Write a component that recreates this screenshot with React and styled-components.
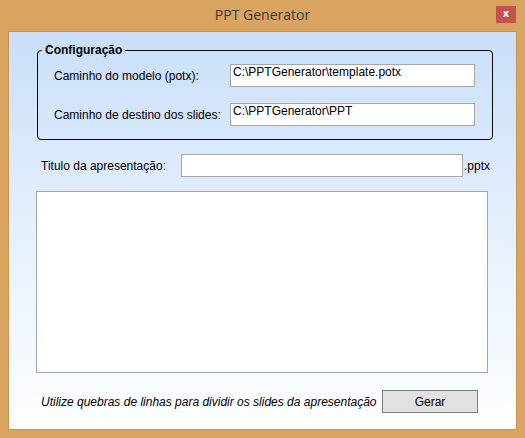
import React from "react";
import styled, { createGlobalStyle } from "styled-components";

const GlobalStyle = createGlobalStyle`
  html, body { margin: 0; padding: 0; }
  body { font-family: "Liberation Sans", Arial, sans-serif; }
  * { box-sizing: border-box; }
`;

const Window = styled.div`
  width: 525px;
  height: 438px;
  background: #d9a45f;
  padding: 0 8px 8px;
  display: flex;
  flex-direction: column;
`;

const TitleBar = styled.div`
  height: 31px;
  display: grid;
  grid-template-columns: 1fr auto 1fr;
  align-items: start;
`;

const Title = styled.div`
  grid-column: 2;
  font-family: "Open Sans", "Noto Sans", sans-serif;
  font-size: 14px;
  line-height: 20px;
  margin-top: 5px;
  color: #3a3a3a;
`;

const CloseButton = styled.div`
  grid-column: 3;
  justify-self: end;
  margin-top: 6px;
  margin-right: 1px;
  width: 20px;
  height: 17px;
  background: #c75050;
  color: #fff;
  font-family: "DejaVu Sans", sans-serif;
  font-weight: bold;
  font-size: 10px;
  line-height: 16px;
  text-align: center;
`;

const Client = styled.div`
  flex: 1;
  border: 1px solid #c79552;
  background: linear-gradient(to bottom, #c9def9 0%, #e6f0fc 50%, #fdfeff 100%);
  padding: 0 0 0 27px;
  display: flex;
  flex-direction: column;
  align-items: flex-start;
`;

const GroupBox = styled.fieldset`
  margin: 11px 0 0 1px;
  padding: 0;
  width: 456px;
  border: 1px solid #0a0a0a;
  border-radius: 4px;
  min-inline-size: 0;
`;

const Legend = styled.legend`
  margin-left: 4px;
  padding: 0 3px;
  font-weight: bold;
  font-size: 12px;
  line-height: 15px;
  color: #000;
`;

const FieldGrid = styled.div`
  display: grid;
  grid-template-columns: 176px 245px;
  row-gap: 16px;
  align-items: center;
  padding: 6px 16px 13px;
`;

const Label = styled.label`
  font-size: 12px;
  color: #000;
  white-space: nowrap;
`;

const TextBox = styled.input`
  width: ${(p) => p.$w}px;
  height: 23px;
  border: 1px solid #a6a6a6;
  background: #fff;
  padding: 0 2px 7px;
  margin: 0;
  font-family: "Liberation Sans", Arial, sans-serif;
  font-size: 12px;
  color: #000;
  outline: none;
`;

const TitleRow = styled.div`
  margin-top: 14px;
  padding-left: 5px;
  display: grid;
  grid-template-columns: 140px auto auto;
  align-items: center;
`;

const Suffix = styled.span`
  font-size: 12px;
  color: #000;
  margin-left: 1px;
`;

const TextArea = styled.textarea`
  margin-top: 14px;
  width: 452px;
  height: 182px;
  border: 1px solid #a6a6a6;
  background: #fff;
  resize: none;
  outline: none;
  font-family: "Liberation Sans", Arial, sans-serif;
  font-size: 12px;
`;

const BottomRow = styled.div`
  margin-top: 17px;
  width: 452px;
  padding: 0 10px 0 5px;
  display: flex;
  align-items: center;
`;

const Hint = styled.span`
  font-style: italic;
  font-size: 12px;
  color: #000;
  white-space: nowrap;
`;

const Button = styled.button`
  margin-left: auto;
  width: 96px;
  height: 23px;
  background: #e1e1e1;
  border: 1px solid #7f7f7f;
  border-radius: 0;
  padding: 0;
  font-family: "Liberation Sans", Arial, sans-serif;
  font-size: 12px;
  color: #000;
`;

export default function App() {
  return (
    <>
      <GlobalStyle />
      <Window>
        <TitleBar>
          <Title>PPT Generator</Title>
          <CloseButton>x</CloseButton>
        </TitleBar>
        <Client>
          <GroupBox>
            <Legend>Configuração</Legend>
            <FieldGrid>
              <Label>Caminho do modelo (potx):</Label>
              <TextBox $w={245} defaultValue="C:\PPTGenerator\template.potx" />
              <Label>Caminho de destino dos slides:</Label>
              <TextBox $w={245} defaultValue="C:\PPTGenerator\PPT" />
            </FieldGrid>
          </GroupBox>
          <TitleRow>
            <Label>Titulo da apresentação:</Label>
            <TextBox $w={282} defaultValue="" />
            <Suffix>.pptx</Suffix>
          </TitleRow>
          <TextArea defaultValue="" />
          <BottomRow>
            <Hint>Utilize quebras de linhas para dividir os slides da apresentação</Hint>
            <Button>Gerar</Button>
          </BottomRow>
        </Client>
      </Window>
    </>
  );
}
